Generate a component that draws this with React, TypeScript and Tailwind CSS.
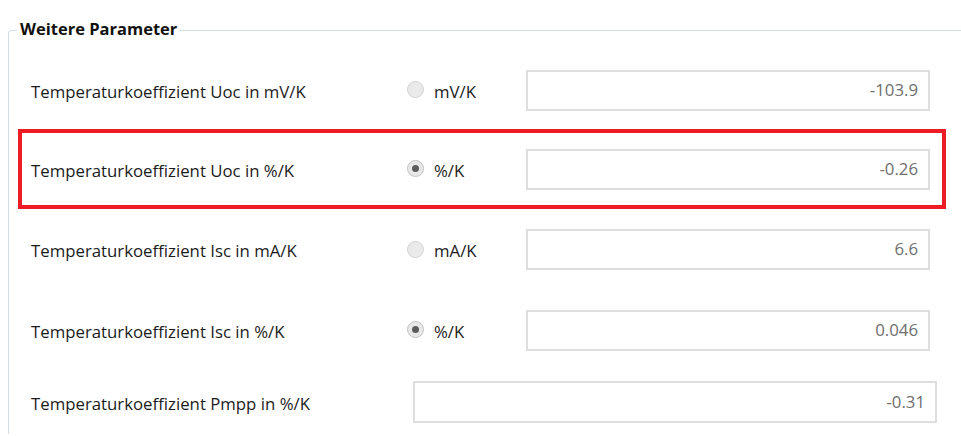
import React from "react";

function Radio({ checked }: { checked: boolean }) {
  return (
    <span
      className={
        "flex h-[17px] w-[17px] items-center justify-center rounded-full border " +
        (checked ? "border-[#c2c2c2] bg-[#e8e8e8]" : "border-[#d2d2d2] bg-[#eaeaea]")
      }
    >
      {checked && <span className="h-[7px] w-[7px] rounded-full bg-[#5c5c5c]" />}
    </span>
  );
}

function ValueBox({ value, className }: { value: string; className: string }) {
  return (
    <div
      className={
        "flex items-center justify-end border-2 border-[#dedede] bg-white pr-[10px] text-[16.8px] leading-none text-[#6e6e6e] " +
        className
      }
    >
      {value}
    </div>
  );
}

function Row({
  label,
  unit,
  checked,
  value,
  labelPad,
}: {
  label: string;
  unit: string;
  checked: boolean;
  value: string;
  labelPad: string;
}) {
  return (
    <div className={"flex h-full items-center " + labelPad}>
      <div className="mt-[4px] w-[376px] text-[16.8px] leading-none text-[#1b1b1b]">{label}</div>
      <div className="flex w-[119px] items-center gap-[10px]">
        <Radio checked={checked} />
        <span className="mt-[4px] text-[16.8px] leading-none text-[#1b1b1b]">{unit}</span>
      </div>
      <ValueBox value={value} className="h-[41px] w-[404px]" />
    </div>
  );
}

export default function App() {
  return (
    <div
      className="relative h-[436px] w-[961px] overflow-hidden bg-white"
      style={{ fontFamily: '"Open Sans", "Noto Sans", sans-serif' }}
    >
      <div className="relative ml-[8px] mt-[30px] w-[1000px] rounded-tl-[4px] border-l border-t border-[#d3dde4] pt-[20px]">
        <span className="absolute left-[8px] top-[-12px] bg-white px-[3px] text-[16.5px] font-bold leading-[20px] text-[#111]">
          Weitere Parameter
        </span>
        <div className="h-[78px]">
          <Row label="Temperaturkoeffizient Uoc in mV/K" unit="mV/K" checked={false} value="-103.9" labelPad="pl-[22px]" />
        </div>
        <div className="ml-[9px] h-[80px] w-[928px] border-4 border-[#ed1c24]">
          <Row label="Temperaturkoeffizient Uoc in %/K" unit="%/K" checked={true} value="-0.26" labelPad="pl-[9px]" />
        </div>
        <div className="h-[81px]">
          <Row label="Temperaturkoeffizient Isc in mA/K" unit="mA/K" checked={false} value="6.6" labelPad="pl-[22px]" />
        </div>
        <div className="h-[80px]">
          <Row label="Temperaturkoeffizient Isc in %/K" unit="%/K" checked={true} value="0.046" labelPad="pl-[22px]" />
        </div>
        <div className="flex h-[64px] items-center pl-[22px]">
          <div className="mt-[4px] w-[382px] text-[16.8px] leading-none text-[#1b1b1b]">Temperaturkoeffizient Pmpp in %/K</div>
          <ValueBox value="-0.31" className="h-[42px] w-[524px]" />
        </div>
      </div>
    </div>
  );
}
